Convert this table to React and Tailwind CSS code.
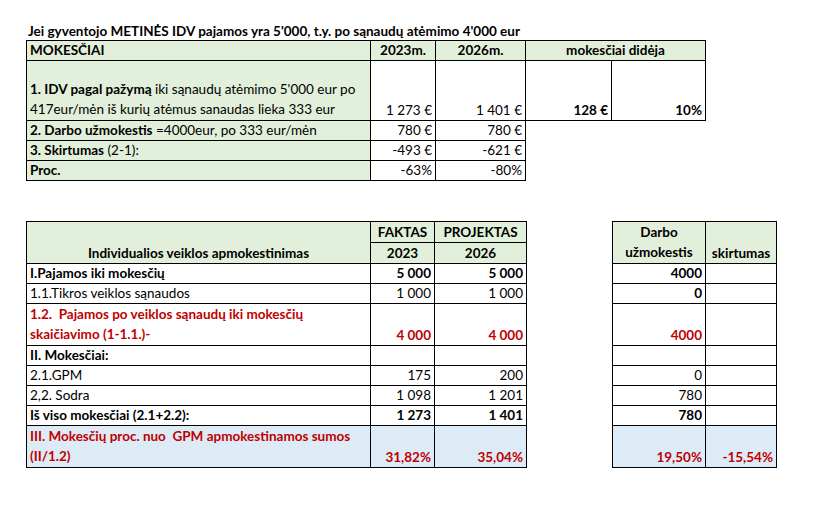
import React from 'react';

const green = 'bg-[#e2efda]';
const blue = 'bg-[#ddebf7]';
const red = 'text-[#c00000]';

// viena langelio forma: kraštinė, tekstas prie apačios
function C({ children, className = '', ...rest }) {
  return (
    <td className={`border border-black align-bottom px-[3px] pb-[1px] whitespace-nowrap overflow-hidden ${className}`} {...rest}>
      {children}
    </td>
  );
}

function Gap() {
  return <td className="border-0"></td>;
}

const rows = [
  { label: 'I.Pajamos iki mokesčių', bold: true, a: '5 000', b: '5 000', ab: true, d: '4000', db: true },
  { label: '1.1.Tikros veiklos sąnaudos', a: '1 000', b: '1 000', d: '0', db: true },
  {
    label: (
      <>
        1.2.{'\u00a0\u00a0'}Pajamos po veiklos sąnaudų iki mokesčių
        <br />
        skaičiavimo (1-1.1.)-
      </>
    ),
    bold: true, red: true, tall: true, a: '4 000', b: '4 000', ab: true, d: '4000', db: true,
  },
  { label: 'II. Mokesčiai:', bold: true, a: '', b: '', d: '' },
  { label: '2.1.GPM', a: '175', b: '200', d: '0' },
  { label: '2,2. Sodra', a: '1 098', b: '1 201', d: '780' },
  { label: 'Iš viso mokesčiai (2.1+2.2):', bold: true, a: '1 273', b: '1 401', ab: true, d: '780', db: true },
  {
    label: (
      <>
        III. Mokesčių proc. nuo{'\u00a0\u00a0'}GPM apmokestinamos sumos
        <br />
        (II/1.2)
      </>
    ),
    bold: true, red: true, tall: true, bg: blue, a: '31,82%', b: '35,04%', ab: true, d: '19,50%', db: true, e: '-15,54%',
  },
];

export default function App() {
  return (
    <div className="w-[822px] h-[505px] bg-white text-black text-[13.5px] leading-[18px] font-['Lato','Liberation_Sans',sans-serif] overflow-hidden">
      <div className="pl-[28px] pt-[22px] h-[40px] font-bold whitespace-nowrap">
        Jei gyventojo METINĖS IDV pajamos yra 5'000, t.y. po sąnaudų atėmimo 4'000 eur
      </div>

      {/* viršutinė lentelė */}
      <table className="ml-[26px] border-collapse table-fixed w-[679px]">
        <colgroup>
          <col className="w-[344px]" />
          <col className="w-[65px]" />
          <col className="w-[90px]" />
          <col className="w-[86px]" />
          <col className="w-[94px]" />
        </colgroup>
        <tbody>
          <tr className="h-[20px]">
            <C className={`${green} font-bold`}>MOKESČIAI</C>
            <C className={`${green} font-bold text-center`}>2023m.</C>
            <C className={`${green} font-bold text-center`}>2026m.</C>
            <C className={`${green} font-bold text-center`} colSpan={2}>mokesčiai didėja</C>
          </tr>
          <tr className="h-[60px]">
            <C className={`${green} leading-[20px]`}>
              <b>1. IDV pagal pažymą</b> iki sąnaudų atėmimo 5'000 eur po
              <br />
              417eur/mėn iš kurių atėmus sanaudas lieka 333 eur
            </C>
            <C className="text-right">1 273 €</C>
            <C className="text-right">1 401 €</C>
            <C className="text-right font-bold">128 €</C>
            <C className="text-right font-bold">10%</C>
          </tr>
          <tr className="h-[20px]">
            <C className={green}>
              <b>2. Darbo užmokestis</b> =4000eur, po 333 eur/mėn
            </C>
            <C className="text-right">780 €</C>
            <C className="text-right">780 €</C>
            <td className="border-0" colSpan={2}></td>
          </tr>
          <tr className="h-[20px]">
            <C className={green}>
              <b>3. Skirtumas</b> (2-1):
            </C>
            <C className="text-right">-493 €</C>
            <C className="text-right">-621 €</C>
            <td className="border-0" colSpan={2}></td>
          </tr>
          <tr className="h-[20px]">
            <C className={`${green} font-bold`}>Proc.</C>
            <C className="text-right">-63%</C>
            <C className="text-right">-80%</C>
            <td className="border-0" colSpan={2}></td>
          </tr>
        </tbody>
      </table>

      {/* apatinė lentelė */}
      <table className="ml-[26px] mt-[40px] border-collapse table-fixed w-[750px]">
        <colgroup>
          <col className="w-[344px]" />
          <col className="w-[64px]" />
          <col className="w-[92px]" />
          <col className="w-[86px]" />
          <col className="w-[93px]" />
          <col className="w-[71px]" />
        </colgroup>
        <tbody>
          <tr className="h-[20px]">
            <C className={`${green} font-bold text-center`} rowSpan={2}>Individualios veiklos apmokestinimas</C>
            <C className={`${green} font-bold text-center`}>FAKTAS</C>
            <C className={`${green} font-bold text-center`}>PROJEKTAS</C>
            <Gap />
            <C className={`${green} font-bold text-center leading-[20px]`} rowSpan={2}>
              Darbo
              <br />
              užmokestis
            </C>
            <C className={`${green} font-bold text-center`} rowSpan={2}>skirtumas</C>
          </tr>
          <tr className="h-[20px]">
            <C className={`${green} font-bold text-center`}>2023</C>
            <C className={`${green} font-bold text-center`}>2026</C>
            <Gap />
          </tr>
          {rows.map((r, i) => (
            <tr key={i} className={r.tall ? 'h-[40px]' : 'h-[20px]'}>
              <C className={`${r.bg || ''} ${r.bold ? 'font-bold' : ''} ${r.red ? red : ''} ${r.tall ? 'leading-[20px]' : ''}`}>
                {r.label}
              </C>
              <C className={`${r.bg || ''} text-right ${r.ab ? 'font-bold' : ''} ${r.red ? red : ''}`}>{r.a}</C>
              <C className={`${r.bg || ''} text-right ${r.ab ? 'font-bold' : ''} ${r.red ? red : ''}`}>{r.b}</C>
              <Gap />
              <C className={`${r.bg || ''} text-right ${r.db ? 'font-bold' : ''} ${r.red ? red : ''}`}>{r.d}</C>
              <C className={`${r.bg || ''} text-right font-bold ${r.red ? red : ''}`}>{r.e || ''}</C>
            </tr>
          ))}
        </tbody>
      </table>
    </div>
  );
}
